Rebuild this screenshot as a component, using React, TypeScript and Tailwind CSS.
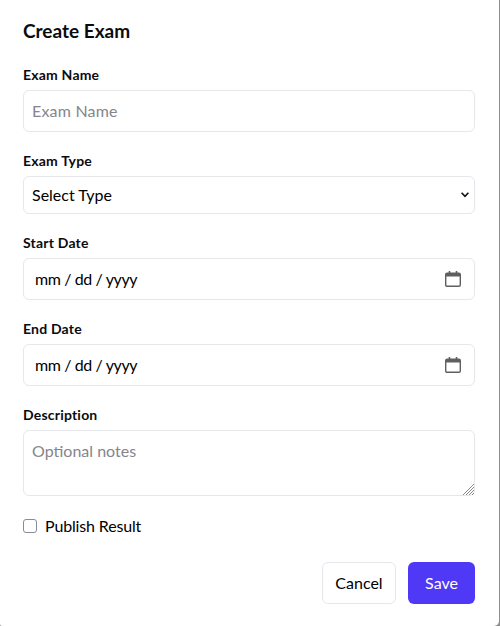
const font = { fontFamily: '"Lato", "Noto Sans", sans-serif' };

function Field({ label, children }: { label: string; children: React.ReactNode }) {
  return (
    <div className="flex flex-col">
      <label className="mb-[5px] text-[14px] leading-[21px] font-bold tracking-[0.2px] text-[#0b0b0f]">{label}</label>
      {children}
    </div>
  );
}

function DateBox() {
  return (
    <div className="flex h-[42px] items-center justify-between rounded-[6px] border border-[#e5e7eb] bg-white pl-[11px] pr-[13px]">
      <span className="pb-[1px] text-[16px] tracking-[-0.4px] text-black">mm / dd / yyyy</span>
      <svg width="16" height="16" viewBox="0 0 16 16" fill="none">
        <path d="M4.5 0v3M11.5 0v3" stroke="#5f5f5f" strokeWidth="1.6" />
        <rect x="0.7" y="2.2" width="14.6" height="13.1" rx="1.4" stroke="#5f5f5f" strokeWidth="1.4" />
        <path d="M1 2.2h14v3.3H1z" fill="#5f5f5f" />
      </svg>
    </div>
  );
}

export default function App() {
  return (
    <div className="h-[626px] w-[500px] bg-[#8f8f8f]">
      <div style={font} className="flex h-[626px] w-[499px] flex-col rounded-bl-[2px] rounded-br-[5px] bg-white pl-[23px] pr-[24px] pt-[19px] text-black">
        <h2 className="mb-[21px] text-[19px] leading-[24px] font-bold text-[#0b0b0f]">Create Exam</h2>
        <div className="flex flex-col gap-[18px]">
          <Field label="Exam Name">
            <input placeholder="Exam Name" className="h-[42px] rounded-[6px] border border-[#e5e7eb] bg-white px-[8px] pb-[2px] text-[16px] tracking-[0.2px] outline-none placeholder:text-[#85858c]" />
          </Field>
          <Field label="Exam Type">
            <div className="relative flex">
              <select className="h-[38px] w-full appearance-none rounded-[6px] border border-[#e5e7eb] bg-white px-[8px] pb-[1px] text-[16px] text-black outline-none">
                <option>Select Type</option>
              </select>
              <svg className="pointer-events-none absolute right-[6px] top-[16px]" width="8" height="6" viewBox="0 0 8 6" fill="none">
                <path d="M0.6 0.8L4 4.4L7.4 0.8" stroke="#111" strokeWidth="1.6" />
              </svg>
            </div>
          </Field>
          <Field label="Start Date"><DateBox /></Field>
          <Field label="End Date"><DateBox /></Field>
          <Field label="Description">
            <div className="relative flex">
              <textarea placeholder="Optional notes" className="h-[66px] w-full resize-none rounded-[6px] border border-[#e5e7eb] bg-white p-[8px] text-[16px] leading-[24px] outline-none placeholder:text-[#85858c]" />
              <svg className="pointer-events-none absolute bottom-[1px] right-[1px]" width="11" height="11" viewBox="0 0 11 11" fill="none">
                <path d="M0 11L11 0M3 11L11 3M6 11L11 6M9 11L11 9" stroke="#8a8a8a" strokeWidth="1" />
              </svg>
            </div>
          </Field>
        </div>
        <label className="mt-[18px] flex items-center gap-[8px]">
          <input type="checkbox" className="m-0 h-[14px] w-[14px] appearance-none rounded-[3px] border border-[#8a8a9a] bg-white" />
          <span className="text-[16px] leading-[24px] tracking-[-0.15px]">Publish Result</span>
        </label>
        <div className="mt-[24px] flex justify-end gap-[12px]">
          <button className="h-[42px] w-[74px] rounded-[6px] border border-[#e5e7eb] bg-white text-[16px]">Cancel</button>
          <button className="h-[42px] w-[67px] rounded-[6px] bg-[#4f39f6] text-[16px] text-white">Save</button>
        </div>
      </div>
    </div>
  );
}
